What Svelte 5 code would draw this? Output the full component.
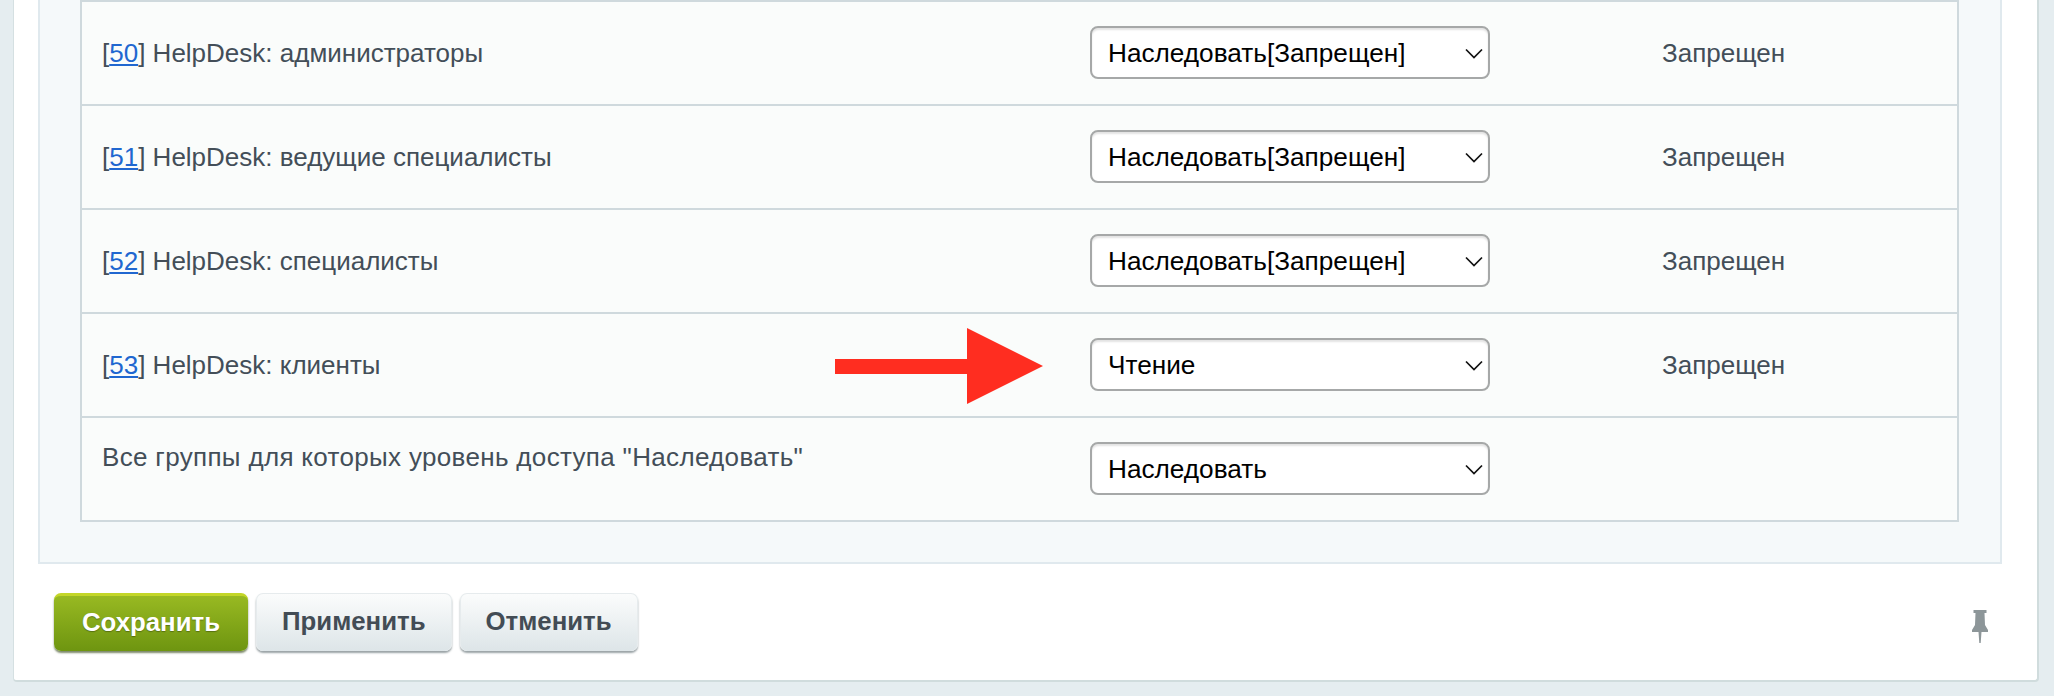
<script>
	const rows = [
		{ id: 50, name: 'HelpDesk: администраторы', value: 'Наследовать[Запрещен]', status: 'Запрещен' },
		{ id: 51, name: 'HelpDesk: ведущие специалисты', value: 'Наследовать[Запрещен]', status: 'Запрещен' },
		{ id: 52, name: 'HelpDesk: специалисты', value: 'Наследовать[Запрещен]', status: 'Запрещен' },
		{ id: 53, name: 'HelpDesk: клиенты', value: 'Чтение', status: 'Запрещен', arrow: true }
	];
</script>

{#snippet picker(value)}
	<div class="picker">
		<select>
			<option>{value}</option>
		</select>
		<svg class="chevron" width="18" height="11" viewBox="0 0 18 11">
			<path d="M1 1.5 L9 9.5 L17 1.5" fill="none" stroke="#111" stroke-width="1.7" />
		</svg>
	</div>
{/snippet}

<div class="page">
	<div class="panel">
		<div class="inner">
			<div class="table">
				{#each rows as row}
					<div class="row">
						<div class="name">[<a href="#{row.id}">{row.id}</a>] {row.name}</div>
						<div class="cell">
							{#if row.arrow}
								<svg class="arrow" width="208" height="76" viewBox="0 0 208 76">
									<path d="M0 31 H132 V0 L208 38 L132 76 V46 H0 Z" fill="#ff2d20" />
								</svg>
							{/if}
							{@render picker(row.value)}
						</div>
						<div class="status">{row.status}</div>
					</div>
				{/each}
				<div class="row last">
					<div class="name top">Все группы для которых уровень доступа "Наследовать"</div>
					<div class="cell">
						{@render picker('Наследовать')}
					</div>
					<div class="status"></div>
				</div>
			</div>
		</div>
		<div class="footer">
			<button class="btn save">Сохранить</button>
			<button class="btn">Применить</button>
			<button class="btn">Отменить</button>
			<svg class="pin" width="16" height="33" viewBox="0 0 16 33">
				<path d="M1.5 0 H14.5 V3 H12.5 L13 15 L16 20 V22 H9.5 L8.7 33 H7.3 L6.5 22 H0 V20 L3 15 L3.5 3 H1.5 Z" fill="#8d9699" />
			</svg>
		</div>
	</div>
</div>

<style>
	:global(body) {
		background: #e5edf0;
		font-family: 'Liberation Sans', Arial, sans-serif;
	}
	.page {
		height: 696px;
		box-sizing: border-box;
		padding: 0 15px 14px 13px;
	}
	.panel {
		height: 682px;
		box-sizing: border-box;
		background: #fff;
		border-right: 2px solid #d0dcdd;
		border-bottom: 2px solid #d0dcdd;
		border-left: 1px solid #d5e0e2;
		border-radius: 0 0 4px 4px;
	}
	.inner {
		margin: 0 35px 0 24px;
		padding: 0 41px 40px 40px;
		background: #f5f9fa;
		border: 2px solid #e0e9ee;
		border-top: 0;
	}
	.table {
		border: 2px solid #cfd9dd;
		border-bottom: 0;
		background: #fafcfb;
	}
	.row {
		display: grid;
		grid-template-columns: 1008px 572px 1fr;
		height: 104px;
		box-sizing: border-box;
		border-bottom: 2px solid #cfd9dd;
		align-items: center;
		font-size: 26px;
		color: #434e58;
	}
	.name {
		padding-left: 20px;
		white-space: nowrap;
	}
	.name.top {
		align-self: start;
		padding-top: 24px;
		letter-spacing: 0.33px;
	}
	.name a {
		color: #2067d0;
		text-decoration: underline;
	}
	.cell {
		position: relative;
		margin-top: -1px;
	}
	.picker {
		position: relative;
		width: 400px;
		height: 53px;
	}
	select {
		appearance: none;
		width: 100%;
		height: 100%;
		box-sizing: border-box;
		padding: 0 0 0 16px;
		border: 2px solid #a6a8a8;
		border-radius: 8px;
		background: #fff;
		box-shadow: inset 0 2px 2px #e3e3e3;
		color: #000;
		font: 26.2px 'Liberation Sans', Arial, sans-serif;
	}
	.chevron {
		position: absolute;
		top: 22px;
		right: 7px;
		pointer-events: none;
	}
	.arrow {
		position: absolute;
		left: -255px;
		top: -10px;
	}
	.footer {
		display: flex;
		align-items: flex-start;
		gap: 8px;
		margin-top: 29px;
		padding: 0 49px 0 40px;
	}
	.btn {
		height: 58px;
		padding: 0 25px 2px;
		border: 1px solid #e6ebed;
		border-bottom: 0;
		border-radius: 7px;
		background: linear-gradient(#fbfcfc, #dde5e8);
		box-shadow: 0 2px 2px #9aa3a6;
		color: #434c55;
		font: bold 25.8px 'Liberation Sans', Arial, sans-serif;
	}
	.save {
		width: 194px;
		border: 0;
		border-top: 3px solid #c3d628;
		background: linear-gradient(#98b922, #6e9510);
		box-shadow: 0 2px 2px #7d8a6a;
		color: #fff;
		text-shadow: 0 1px 1px rgba(0, 0, 0, 0.3);
	}
	.pin {
		margin-left: auto;
		margin-top: 17px;
		filter: blur(0.4px);
	}
</style>
